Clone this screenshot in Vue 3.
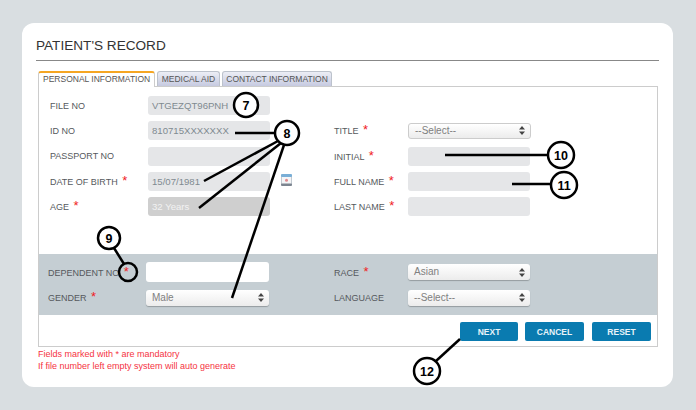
<script setup>
const tabs = [
  { label: 'PERSONAL INFORMATION', active: true },
  { label: 'MEDICAL AID' },
  { label: 'CONTACT INFORMATION' },
]
const callouts = [
  { n: 7, x: 246, y: 105, r: 12 },
  { n: 8, x: 287, y: 133, r: 12 },
  { n: 9, x: 109, y: 238, r: 11 },
  { n: 10, x: 561, y: 155, r: 13 },
  { n: 11, x: 564, y: 185, r: 13 },
  { n: 12, x: 427, y: 371, r: 13 },
]
const lines = [
  [235, 133, 275, 133],
  [204, 181, 278, 141],
  [199, 208, 281, 143],
  [232, 298, 284, 145],
  [114, 248, 124, 264],
  [445, 155, 548, 155],
  [512, 184, 551, 184],
  [460, 339, 436, 361],
]
</script>

<template>
  <div class="page">
    <section class="card">
      <h1 class="title">PATIENT'S RECORD</h1>
      <nav class="tabs">
        <span v-for="t in tabs" :key="t.label" class="tab" :class="{ active: t.active }">{{ t.label }}</span>
      </nav>
      <div class="panel">
        <div class="upper">
          <label class="lab">FILE NO</label>
          <div class="field">VTGEZQT96PNH</div>
          <span></span><span></span><span></span>

          <label class="lab">ID NO</label>
          <div class="field">810715XXXXXXX</div>
          <span></span>
          <label class="lab">TITLE <i>*</i></label>
          <div class="select outlined">--Select--<svg class="arrows" width="6" height="9" viewBox="0 0 6 9"><path d="M3 0 6 3.500H0ZM3 9 0 5.500H6Z" /></svg></div>

          <label class="lab">PASSPORT NO</label>
          <div class="field"></div>
          <span></span>
          <label class="lab">INITIAL <i>*</i></label>
          <div class="field"></div>

          <label class="lab">DATE OF BIRTH <i>*</i></label>
          <div class="field">15/07/1981</div>
          <span class="cal-cell">
            <svg width="11" height="12" viewBox="0 0 11 12">
              <rect x="0.500" y="0.500" width="10" height="11" rx="1.500" fill="#f4f5f7" stroke="#c3cad1" />
              <rect x="0" y="0" width="11" height="3" rx="1" fill="#79aed6" />
              <rect x="0" y="9.500" width="11" height="2.500" rx="1" fill="#7c8590" />
              <circle cx="5.500" cy="6.200" r="1.500" fill="#e08a8e" />
            </svg>
          </span>
          <label class="lab">FULL NAME <i>*</i></label>
          <div class="field"></div>

          <label class="lab">AGE <i>*</i></label>
          <div class="field dark">32 Years</div>
          <span></span>
          <label class="lab">LAST NAME <i>*</i></label>
          <div class="field"></div>
        </div>

        <div class="band">
          <label class="lab">DEPENDENT NO <i>*</i></label>
          <div class="field white"></div>
          <span></span>
          <label class="lab">RACE <i>*</i></label>
          <div class="select">Asian<svg class="arrows" width="6" height="9" viewBox="0 0 6 9"><path d="M3 0 6 3.500H0ZM3 9 0 5.500H6Z" /></svg></div>

          <label class="lab">GENDER <i>*</i></label>
          <div class="select">Male<svg class="arrows" width="6" height="9" viewBox="0 0 6 9"><path d="M3 0 6 3.500H0ZM3 9 0 5.500H6Z" /></svg></div>
          <span></span>
          <label class="lab">LANGUAGE</label>
          <div class="select">--Select--<svg class="arrows" width="6" height="9" viewBox="0 0 6 9"><path d="M3 0 6 3.500H0ZM3 9 0 5.500H6Z" /></svg></div>
        </div>

        <div class="actions">
          <button class="btn">NEXT</button>
          <button class="btn">CANCEL</button>
          <button class="btn">RESET</button>
        </div>
      </div>
      <p class="note">Fields marked with * are mandatory</p>
      <p class="note">If file number left empty system will auto generate</p>
    </section>

    <svg class="overlay" width="696" height="410" viewBox="0 0 696 410">
      <line v-for="(l, i) in lines" :key="i" :x1="l[0]" :y1="l[1]" :x2="l[2]" :y2="l[3]" stroke="#000" stroke-width="2.500" />
      <circle cx="128" cy="272" r="9" fill="none" stroke="#000" stroke-width="2.500" />
      <g v-for="c in callouts" :key="c.n">
        <circle :cx="c.x" :cy="c.y" :r="c.r" fill="#fff" stroke="#000" stroke-width="2.500" />
        <text :x="c.x" :y="c.y + 4.500" text-anchor="middle" class="num">{{ c.n }}</text>
      </g>
    </svg>
  </div>
</template>

<style scoped>
.page {
  position: relative;
  width: 696px;
  height: 410px;
  box-sizing: border-box;
  padding: 23px 23px 23px 22px;
  background: #d9dee1;
  font-family: "Liberation Sans", Arial, sans-serif;
  overflow: hidden;
}
.card {
  box-sizing: border-box;
  height: 364px;
  padding: 0 14px 0 14px;
  background: #fff;
  border-radius: 12px;
}
.title {
  margin: 0;
  height: 38px;
  box-sizing: border-box;
  padding-top: 15px;
  font-size: 13.600px;
  line-height: 16px;
  font-weight: 400;
  color: #333;
  border-bottom: 1px solid #888;
}
.tabs {
  display: flex;
  gap: 2px;
  height: 15px;
  margin: 10px 0 0 2px;
}
.tab {
  box-sizing: border-box;
  height: 15px;
  padding: 0 3.500px;
  font-size: 8.500px;
  line-height: 15px;
  color: #555;
  white-space: nowrap;
  background: linear-gradient(#eceef5, #c6cae0);
  border: 1px solid #bcc2cc;
  border-bottom: 0;
  border-radius: 3px 3px 0 0;
}
.tab.active {
  height: 16px;
  padding: 0 4px;
  position: relative;
  z-index: 1;
  background: #fff;
  border-color: #ccc;
  border-top: 2px solid #f5a623;
  line-height: 13px;
}
.panel {
  box-sizing: border-box;
  height: 261px;
  margin-left: 2px;
  margin-right: 1px;
  border: 1px solid #ccc;
  display: flex;
  flex-direction: column;
}
.upper {
  display: grid;
  grid-template-columns: 98px 122px 64px 74px 122px;
  grid-auto-rows: 19px;
  row-gap: 6.250px;
  align-items: center;
  padding: 9px 0 0 11px;
  height: 167px;
  box-sizing: border-box;
}
.band {
  display: grid;
  grid-template-columns: 98px 123px 65px 74px 122px;
  grid-template-rows: 20px 17px;
  row-gap: 7px;
  align-items: center;
  box-sizing: border-box;
  height: 61px;
  padding: 8px 0 0 9px;
  background: #c5ced3;
}
.lab {
  font-size: 9px;
  color: #55595d;
  white-space: nowrap;
}
.lab i {
  font-style: normal;
  font-size: 13px;
  line-height: 9px;
  color: #f01c24;
  margin-left: 2px;
}
.field {
  box-sizing: border-box;
  height: 19px;
  padding: 0 4px;
  border-radius: 3px;
  background: #e5e6e8;
  font-size: 9.600px;
  line-height: 19px;
  color: #7f8a90;
}
.field.dark {
  background: #cfcfcf;
  color: #f2f2f2;
}
.field.white {
  background: #fff;
  height: 20px;
}
.select {
  box-sizing: border-box;
  position: relative;
  height: 16px;
  padding: 0 6px;
  border-radius: 3px;
  background: linear-gradient(#fff, #ececec);
  box-shadow: 0 1px 1px rgba(0, 0, 0, 0.25);
  font-size: 10px;
  line-height: 16px;
  color: #808080;
}
.select.outlined {
  width: 123px;
  border: 1px solid #ccc;
  box-shadow: none;
  line-height: 14px;
}
.arrows {
  position: absolute;
  right: 5px;
  top: 50%;
  margin-top: -4.500px;
  fill: #444;
}
.cal-cell {
  display: flex;
  padding: 0 0 3px 11px;
}
.actions {
  display: flex;
  justify-content: flex-end;
  gap: 7px;
  padding: 7px 6px 0 0;
}
.btn {
  width: 59px;
  height: 19px;
  padding: 0;
  border: 0;
  border-radius: 2px;
  background: #0a7bb0;
  color: #e8f3f8;
  font-family: inherit;
  font-size: 8.500px;
  font-weight: 700;
}
.btn:first-child {
  width: 58px;
}
.btn:last-child {
  margin-left: 1px;
}
.note {
  margin: 0 0 0 2px;
  font-size: 9px;
  line-height: 12px;
  color: #f5333f;
}
.panel + .note {
  margin-top: 1px;
}
.overlay {
  position: absolute;
  left: 0;
  top: 0;
  pointer-events: none;
}
.num {
  font-size: 12.500px;
  font-weight: 700;
  fill: #000;
  font-family: "Liberation Sans", Arial, sans-serif;
}
</style>
